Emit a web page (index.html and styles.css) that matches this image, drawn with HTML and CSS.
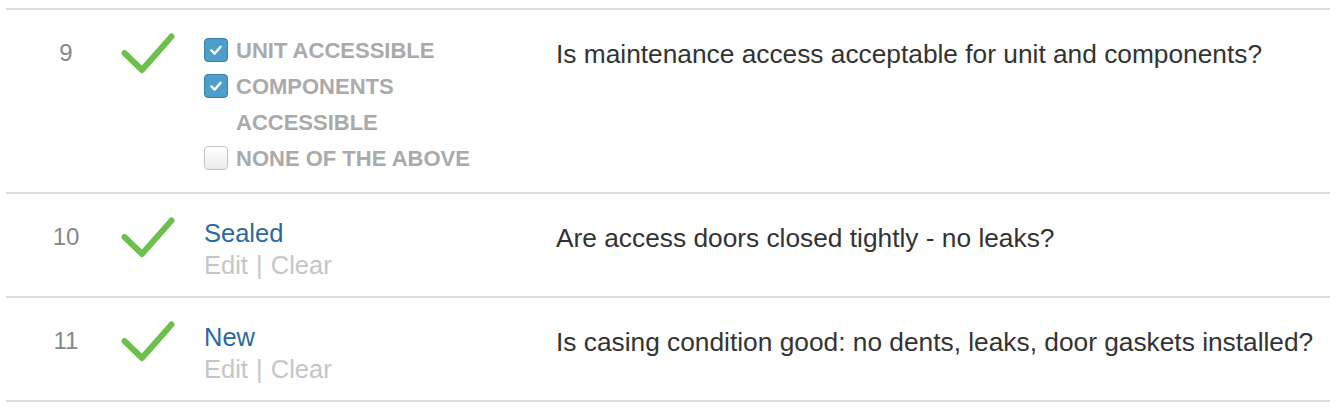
FILE: index.html
```html
<!DOCTYPE html>
<html lang="en">
<head>
    <meta charset="UTF-8">
    <title>Inspection Checklist</title>
    <link rel="stylesheet" href="styles.css">
</head>
<body>

    <div class="checklist">
        <div class="item">
            <div class="num">9</div>
            <div class="status">
                <svg class="tick" width="56" height="44" viewBox="0 0 56 44"><polyline points="4.5,20 22,37 51.5,3.5"/></svg>
            </div>
            <div class="answer">
                <div class="opt">
                    <span class="box checked"><svg viewBox="0 0 24 24"><polyline points="7,12.5 10.5,16 17,8.5"/></svg></span>
                    <span class="opt-label">UNIT ACCESSIBLE</span>
                </div>
                <div class="opt">
                    <span class="box checked"><svg viewBox="0 0 24 24"><polyline points="7,12.5 10.5,16 17,8.5"/></svg></span>
                    <span class="opt-label">COMPONENTS ACCESSIBLE</span>
                </div>
                <div class="opt">
                    <span class="box"></span>
                    <span class="opt-label">NONE OF THE ABOVE</span>
                </div>
            </div>
            <div class="question">Is maintenance access acceptable for unit and components?</div>
        </div>

        <div class="item">
            <div class="num">10</div>
            <div class="status">
                <svg class="tick" width="56" height="44" viewBox="0 0 56 44"><polyline points="4.5,20 22,37 51.5,3.5"/></svg>
            </div>
            <div class="answer">
                <div class="value">Sealed</div>
                <div class="actions">Edit <span class="sep">|</span> Clear</div>
            </div>
            <div class="question">Are access doors closed tightly - no leaks?</div>
        </div>

        <div class="item">
            <div class="num">11</div>
            <div class="status">
                <svg class="tick" width="56" height="44" viewBox="0 0 56 44"><polyline points="4.5,20 22,37 51.5,3.5"/></svg>
            </div>
            <div class="answer">
                <div class="value">New</div>
                <div class="actions">Edit <span class="sep">|</span> Clear</div>
            </div>
            <div class="question">Is casing condition good: no dents, leaks, door gaskets installed?</div>
        </div>
    </div>

</body>
</html>
```

FILE: styles.css
```css
body {
    margin: 0;
    padding: 8px 0 0 6px;
    font-family: "Liberation Sans", Arial, sans-serif;
    font-size: 24px;
    line-height: 32px;
    color: #333;
    background: #fff;
}
.checklist {
    border-top: 2px solid #ddd;
}
.item {
    display: flex;
    border-bottom: 2px solid #ddd;
}
.num {
    width: 120px;
    padding-top: 27px;
    text-align: center;
    color: #888;
}
.status {
    width: 78px;
    padding-top: 23px;
}
.tick {
    display: block;
    margin-left: -6px;
}
.tick polyline {
    fill: none;
    stroke: #6cc04e;
    stroke-width: 6;
    stroke-linecap: round;
    stroke-linejoin: round;
}
.answer {
    width: 300px;
    padding: 23px 52px 15px 0;
}
.opt {
    display: flex;
    align-items: flex-start;
    font-size: 22px;
    line-height: 36px;
    font-weight: bold;
    color: #aaa;
}
.box {
    flex: none;
    width: 22px;
    height: 22px;
    margin: 5px 8px 0 0;
    border: 1px solid #c4c4c4;
    border-radius: 4px;
    background: linear-gradient(#fff, #ececec);
}
.box.checked {
    border-color: #3a80ab;
    background: #4c9fcb;
}
.box svg {
    display: block;
    width: 22px;
    height: 22px;
}
.box polyline {
    fill: none;
    stroke: #fff;
    stroke-width: 2.6;
    stroke-linecap: round;
    stroke-linejoin: round;
}
.value,
.actions {
    font-size: 25.5px;
}
.value {
    color: #2b6aa0;
}
.actions {
    color: #c6c6c6;
}
.sep {
    padding: 0 1px;
}
.question {
    flex: 1;
    padding-top: 28px;
    font-size: 26.3px;
}
```
